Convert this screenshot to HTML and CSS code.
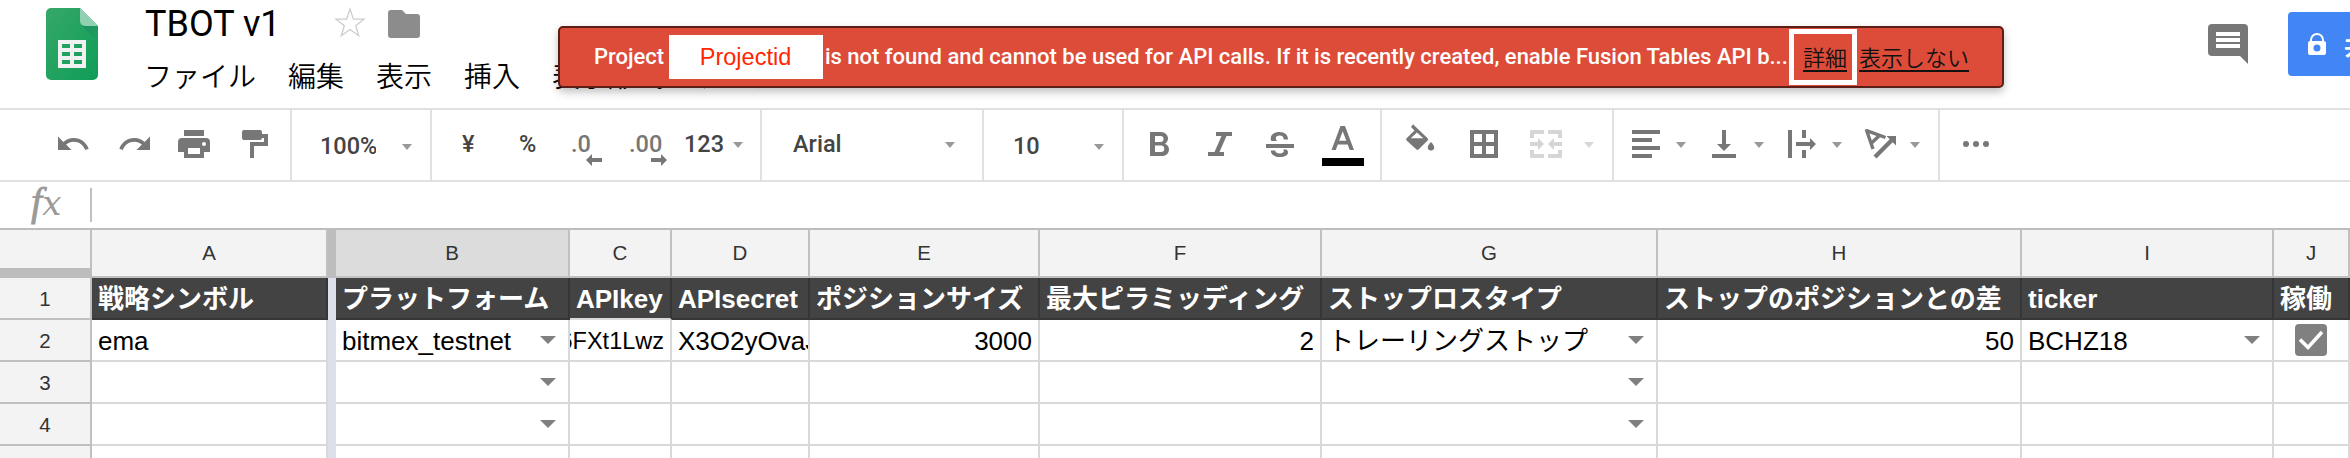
FILE: index.html
```html
<!DOCTYPE html>
<html lang="ja">
<head>
<meta charset="utf-8">
<title>TBOT v1</title>
<link rel="stylesheet" href="styles.css">
</head>
<body>
<header class="header">
  <svg class="logo" viewBox="0 0 52 72">
    <defs>
      <linearGradient id="sheet" x1="0" y1="0" x2="1" y2="1"><stop offset="0" stop-color="#36a868"/><stop offset="1" stop-color="#0f9d58"/></linearGradient>
      <linearGradient id="fold" x1="0" y1="0" x2="1" y2="1"><stop offset="0" stop-color="#1d8f5c"/><stop offset="1" stop-color="#20a063"/></linearGradient>
    </defs>
    <path fill="url(#sheet)" d="M5 0h29l18 18v49a5 5 0 0 1-5 5H5a5 5 0 0 1-5-5V5a5 5 0 0 1 5-5z"/>
    <path fill="url(#fold)" d="M36 17.500L52 34V18z"/>
    <path fill="#8fd1b1" d="M34 0l18 18H39a5 5 0 0 1-5-5z"/>
    <path fill="#f1f1f1" fill-rule="evenodd" d="M12 32h28v28H12zM16 36v4h8v-4zM28 36v4h8v-4zM16 44v4h8v-4zM28 44v4h8v-4zM16 52v4h8v-4zM28 52v4h8v-4z"/>
  </svg>
  <div class="heading">
    <div class="title-row">
      <span class="title">TBOT v1</span>
      <svg class="star" viewBox="0 0 32 32"><path fill="none" stroke="#ccc" stroke-width="1.300" d="M16 3l3.400 10.200h10.600l-8.300 6.500 3 10L16 23.500l-8.700 6.200 3-10L2 13.200h10.600z"/></svg>
      <svg class="folder" viewBox="0 0 32 28"><path fill="#8c8c8c" d="M3 0h11l4 4h11a3 3 0 0 1 3 3v18a3 3 0 0 1-3 3H3a3 3 0 0 1-3-3V3a3 3 0 0 1 3-3z"/></svg>
    </div>
    <nav class="menu"><span>ファイル</span><span>編集</span><span>表示</span><span>挿入</span><span>表示形式</span><span>データ</span><span>ツール</span><span>アドオン</span><span>ヘルプ</span></nav>
  </div>
  <div class="actions">
    <svg class="comment" viewBox="0 0 40 40"><path fill="#777" fill-rule="evenodd" d="M4 0h32a4 4 0 0 1 4 4v36l-8-8H4a4 4 0 0 1-4-4V4a4 4 0 0 1 4-4zM8 8v4h24V8zM8 14v4h24v-4zM8 20v4h24v-4z"/></svg>
    <div class="share">
      <svg class="lock" viewBox="0 0 18 22"><path fill="#fff" fill-rule="evenodd" d="M2 8V7a7 7 0 0 1 14 0v1a2 2 0 0 1 2 2v10a2 2 0 0 1-2 2H2a2 2 0 0 1-2-2V10a2 2 0 0 1 2-2zM4 8h10V7A5 5 0 0 0 4 7zM9 11.500a3.500 3.500 0 1 0 0 7 3.500 3.500 0 0 0 0-7z"/></svg>
      <span>共有</span>
    </div>
  </div>
  <div class="banner">
    <span>Project</span><span class="project">Projectid</span><span class="message">is not found and cannot be used for API calls. If it is recently created, enable Fusion Tables API b...</span><span class="details"><a>詳細</a></span><a>表示しない</a>
  </div>
</header>

<div class="toolbar">
  <div class="group g-history">
    <svg class="icon" viewBox="0 0 24 24"><path d="M12.500 8c-2.650 0-5.050.99-6.900 2.600L2 7v9h9l-3.620-3.620c1.390-1.160 3.160-1.880 5.120-1.880 3.540 0 6.550 2.310 7.600 5.500l2.370-.78C21.080 11.030 17.150 8 12.500 8z"/></svg>
    <svg class="icon redo" viewBox="0 0 24 24"><path d="M18.400 10.600C16.550 8.990 14.150 8 11.500 8c-4.650 0-8.580 3.030-9.960 7.220L3.900 16c1.050-3.190 4.050-5.500 7.600-5.500 1.950 0 3.730.72 5.120 1.880L13 16h9V7l-3.600 3.600z"/></svg>
    <svg class="icon print" viewBox="0 0 36 36"><path fill-rule="evenodd" d="M8 4h20v6H8zM6 12h24a4 4 0 0 1 4 4v10h-6v6H8v-6H2V16a4 4 0 0 1 4-4zM12 22v6h12v-6zM28 16a2 2 0 1 0 0 4 2 2 0 0 0 0-4z"/></svg>
    <svg class="icon paint" viewBox="0 0 36 36"><path d="M6 4h16a2 2 0 0 1 2 2v2h6v12H16v12h-4V16h14v-4h-2v0a2 2 0 0 1-2 2H6a2 2 0 0 1-2-2V6a2 2 0 0 1 2-2z"/></svg>
  </div>
  <div class="group g-zoom"><span class="low zoom">100%</span><i class="caret low"></i></div>
  <div class="group g-format">
    <span class="yen">¥</span><span class="percent">%</span>
    <span class="decimal less">.0<svg viewBox="0 0 16 12"><path d="M0 6l6-6v4h10v4H6v4z"/></svg></span>
    <span class="decimal more">.00<svg viewBox="0 0 16 12"><path d="M16 6l-6-6v4H0v4h10v4z"/></svg></span>
    <span class="num">123</span><i class="caret"></i>
  </div>
  <div class="group g-font"><span>Arial</span><i class="caret"></i></div>
  <div class="group g-size"><span class="low">10</span><i class="caret low"></i></div>
  <div class="group g-style">
    <svg class="icon" viewBox="0 0 36 36"><path fill-rule="evenodd" d="M8 6h11c4 0 7 3 7 6.500 0 2.200-1.200 4.200-3 5.200 2.500 1 4 3 4 5.700 0 3.600-3 6.600-7 6.600H8zM13 10v6h5.500a3 3 0 0 0 0-6zM13 19.500V26h6a3.200 3.200 0 0 0 0-6.500z"/></svg>
    <svg class="icon italic" viewBox="0 0 36 36"><path d="M14 6h16v4h-5.500l-7 16H22v4H6v-4h6.500l7-16H14z"/></svg>
    <svg class="icon strike" viewBox="0 0 36 36"><path d="M4 18h28v4H4z"/><path d="M26 13.500h-4.300c0-2.500-1.400-3.900-4-3.900-2.300 0-3.900 1-3.900 2.800 0 1 .4 1.800 1.500 2.600h-6c-.4-.8-.6-1.700-.6-2.600C8.700 8.600 12.300 6 17.600 6c5.200 0 8.400 2.900 8.400 7.500zM24.500 23.500c.9.900 1.500 1.500 1.500 3 0 2.700-3.200 4.600-8 4.600-5.200 0-9.200-2.400-9.200-6.600h4.400c.1 1.900 2 2.900 4.800 2.900 2.300 0 3.800-.8 3.800-2.400 0-.6-.2-1-.6-1.500z"/></svg>
    <svg class="text-color" viewBox="0 0 42 42"><path fill-rule="evenodd" d="M18.500 2h4.500l9 24h-4.300l-2-5.400H15.800l-2 5.400H9.500zM20.700 7.200l-3.500 9.600h7.100z"/><path fill="#000" d="M0 34h42v8H0z"/></svg>
  </div>
  <div class="group g-cells">
    <svg class="icon fill" viewBox="0 0 36 36"><path fill-rule="evenodd" d="M11 -1.800l14.600 14a1.500 1.500 0 0 1 0 2.200L16.500 23.500a1.500 1.500 0 0 1-2 0L4.600 14.400a1.500 1.500 0 0 1 0-2.200L12.500 4.500 9 1zM15 6.500L8.700 12.300h12.600zM29 16s3.200 3.200 3.200 5.200a3.200 3.200 0 0 1-6.400 0c0-2 3.200-5.200 3.200-5.200z"/></svg>
    <svg class="icon borders" viewBox="0 0 36 36"><path fill-rule="evenodd" d="M4 4h28v28H4zM8 8v8h8V8zM20 8v8h8V8zM8 20v8h8v-8zM20 20v8h8v-8z"/></svg>
    <svg class="icon merge" viewBox="0 0 36 36"><path d="M2 4h14v4H6v4H2zM20 4h14v8h-4V8H20zM2 24h4v4h10v4H2zM30 24h4v8H20v-4h10zM2 16h8v-4l6 6-6 6v-4H2zM34 16h-8v-4l-6 6 6 6v-4h8z"/></svg>
    <i class="caret pale"></i>
  </div>
  <div class="group g-align">
    <svg class="icon" viewBox="0 0 36 36"><path d="M4 4h28v4H4zM4 12h20v4H4zM4 20h28v4H4zM4 28h20v4H4z"/></svg><i class="caret c1"></i>
    <svg class="icon valign" viewBox="0 0 36 36"><path d="M6 28h24v4H6zM16 4h4v14h5l-7 7-7-7h5z"/></svg><i class="caret c2"></i>
    <svg class="icon wrap" viewBox="0 0 36 36"><path d="M4 4h4v28H4zM18 4h4v8h-4zM18 24h4v8h-4zM12 16h14v-4l6 6-6 6v-4H12z"/></svg><i class="caret c3"></i>
    <svg class="icon rotate" viewBox="0 0 36 36"><path fill="none" stroke="#777" stroke-width="3.400" stroke-linejoin="round" d="M23.500 11.500L4.700 4.700 11 23M17.500 9.500l-8.500 8"/><path d="M24.500 10H34v9.500l-3.300-3.300L14.500 32.500l-3-3L27.700 13.200z"/></svg><i class="caret c4"></i>
  </div>
  <svg class="dots" viewBox="0 0 26 6"><circle cx="3" cy="3" r="3"/><circle cx="13" cy="3" r="3"/><circle cx="23" cy="3" r="3"/></svg>
</div>

<div class="formula"><span class="fx"><span class="f">f</span><span class="x">x</span></span><i class="divider"></i></div>

<main class="sheet">
  <div class="row letters">
    <div class="corner"></div><div>A</div><div class="freeze"></div><div class="selected">B</div><div>C</div><div>D</div><div>E</div><div>F</div><div>G</div><div>H</div><div>I</div><div>J</div>
  </div>
  <div class="row titles">
    <div class="number">1</div><div>戦略シンボル</div><div class="freeze"></div><div>プラットフォーム</div><div class="light">APIkey</div><div>APIsecret</div><div>ポジションサイズ</div><div>最大ピラミッディング</div><div>ストップロスタイプ</div><div>ストップのポジションとの差</div><div>ticker</div><div>稼働</div>
  </div>
  <div class="row">
    <div class="number">2</div><div>ema</div><div class="freeze"></div><div class="pick">bitmex_testnet<i class="arrow"></i></div><div class="right key">6FXt1Lwz</div><div>X3O2yOvaJ</div><div class="right">3000</div><div class="right">2</div><div class="pick">トレーリングストップ<i class="arrow"></i></div><div class="right">50</div><div class="pick">BCHZ18<i class="arrow"></i></div>
    <div class="checkcell"><svg class="check" viewBox="0 0 32 32"><rect width="32" height="32" rx="4" fill="#808080"/><path fill="none" stroke="#fff" stroke-width="3.600" d="M5 15.500l8 8L27 8"/></svg></div>
  </div>
  <div class="row">
    <div class="number">3</div><div></div><div class="freeze"></div><div class="pick"><i class="arrow"></i></div><div></div><div></div><div></div><div></div><div class="pick"><i class="arrow"></i></div><div></div><div></div><div></div>
  </div>
  <div class="row">
    <div class="number">4</div><div></div><div class="freeze"></div><div class="pick"><i class="arrow"></i></div><div></div><div></div><div></div><div></div><div class="pick"><i class="arrow"></i></div><div></div><div></div><div></div>
  </div>
  <div class="row last">
    <div class="number"></div><div></div><div class="freeze"></div><div></div><div></div><div></div><div></div><div></div><div></div><div></div><div></div><div></div>
  </div>
</main>
</body>
</html>
```
FILE: styles.css
```css
* { box-sizing: border-box; }
body { margin: 0; width: 2350px; height: 458px; overflow: hidden; background: #fff; font-family: "Liberation Sans", "Noto Sans CJK JP", sans-serif; color: #000; }
svg { display: block; flex: none; }

/* Header */
.header { position: relative; display: flex; height: 108px; padding-left: 46px; }
.logo { width: 52px; height: 72px; margin-top: 8px; }
.heading { flex: 1; margin-left: 46px; }
.title-row { display: flex; height: 48px; align-items: flex-start; }
.title { width: 190px; padding-left: 1px; font: 36px/48px Roboto, sans-serif; }
.star { width: 32px; height: 32px; margin-top: 6px; }
.folder { width: 32px; height: 28px; margin: 10px 0 0 22px; }
.menu { display: flex; gap: 32px; margin-top: 10px; font: 28px/34px "Noto Sans CJK JP", sans-serif; font-weight: 350; white-space: nowrap; }
.actions { display: flex; width: 142px; }
.comment { width: 40px; height: 40px; margin-top: 24px; }
.share { display: flex; align-items: center; flex: none; width: 62px; height: 64px; margin: 12px 0 0 40px; padding-left: 20px; overflow: hidden; gap: 18px; background: #4285f4; border-radius: 4px 0 0 4px; color: #fff; font: bold 24px "Noto Sans CJK JP", sans-serif; white-space: nowrap; }
.lock { width: 18px; height: 22px; }

/* Error notice lies over the menu bar */
.banner { position: absolute; left: 558px; top: 26px; display: flex; align-items: center; width: 1446px; height: 62px; padding-left: 34px; background: #dd4b39; border: 2px solid #5c1f18; border-radius: 5px; box-shadow: 0 4px 8px rgba(0, 0, 0, .25); color: #fff; font: 500 22px/26px Roboto, "Noto Sans CJK JP", sans-serif; white-space: nowrap; }
.banner > span:first-child { width: 75px; }
.banner .project { width: 154px; height: 44px; padding-right: 1px; background: #fff; color: #ff2600; font: 23.500px/44px "Liberation Sans", sans-serif; text-align: center; }
.banner .message { width: 966px; padding-left: 2px; letter-spacing: -0.01px; }
.banner .details { display: flex; align-items: center; justify-content: center; width: 68px; height: 56px; margin-right: 2px; padding-left: 4px; border: 5px solid #fff; }
.banner a { color: #111; font: 350 22px/26px "Noto Sans CJK JP", sans-serif; padding-bottom: 2px; text-decoration: underline; text-decoration-thickness: 2px; text-underline-offset: 4px; }

/* Toolbar */
.toolbar { display: flex; height: 74px; border-top: 2px solid #e0e0e0; border-bottom: 2px solid #e0e0e0; color: #444; fill: #777; font: 500 23.500px/28px Roboto, sans-serif; }
.group { display: flex; align-items: center; height: 70px; padding-bottom: 2px; border-right: 2px solid #e0e0e0; }
.icon { width: 36px; height: 36px; overflow: visible; }
.caret { flex: none; width: 10px; height: 6px; background: #999; clip-path: polygon(0 0, 100% 0, 50% 100%); position: relative; top: 1px; }
.low { position: relative; top: 2px; }
.caret.low { top: 3px; }
.caret.pale { background: #d8d8d8; }
.g-history { width: 292px; padding-left: 55px; }
.redo { margin-left: 26px; }
.print { margin-left: 23px; }
.paint { margin-left: 26px; }
.g-zoom { width: 140px; padding-left: 28px; }
.zoom { width: 56px; overflow: hidden; margin-right: 26px; }
.g-format { width: 330px; padding-left: 30px; }
.yen { width: 57px; }
.percent { width: 52px; }
.decimal { position: relative; width: 58px; color: #777; }
.decimal svg { position: absolute; width: 16px; height: 12px; top: 24px; left: 15px; }
.decimal.more { width: 55px; }
.decimal.more svg { left: 22px; }
.num { width: 49px; }
.g-font { width: 222px; padding-left: 31px; }
.g-font span { width: 152px; }
.g-size { width: 140px; padding-left: 29px; }
.g-size span { width: 81px; }
.g-style { width: 258px; padding-left: 18px; }
.italic { margin-left: 24px; }
.strike { margin-left: 24px; }
.text-color { width: 42px; height: 42px; margin: 2px 0 0 24px; }
.g-cells { width: 232px; padding-left: 20px; }
.borders { margin-left: 28px; }
.merge { margin-left: 26px; margin-right: 20px; fill: #d6d6d6; }
.g-align { width: 326px; padding-left: 14px; }
.c1 { margin-left: 12px; }
.valign { margin-left: 20px; }
.c2 { margin-left: 12px; }
.wrap { margin-left: 20px; }
.c3 { margin-left: 12px; }
.rotate { margin-left: 20px; }
.c4 { margin-left: 12px; }
.dots { width: 26px; height: 6px; margin: 31px 0 0 23px; }

/* Formula bar */
.formula { display: flex; height: 46px; align-items: center; color: #999; }
.fx { display: flex; align-items: baseline; width: 90px; height: 46px; padding-left: 31px; font: italic 40px/40px "Liberation Serif", serif; -webkit-text-stroke: .8px #999; }
.x { font: italic 34px/40px "DejaVu Serif", serif; -webkit-text-stroke: 0; }
.divider { width: 2px; height: 34px; background: #c0c0c0; }

/* Sheet */
.sheet { height: 230px; overflow: hidden; border-top: 2px solid #bdbdbd; }
.row { display: grid; grid-template-columns: 92px 236px 8px 234px 102px 138px 230px 282px 336px 364px 252px 76px; height: 42px; font-size: 26px; line-height: 42px; white-space: nowrap; }
.row > div { overflow: hidden; height: 42px; padding: 0 6px; border-right: 2px solid #d9d9d9; border-bottom: 2px solid #d9d9d9; }
.row > .number { padding: 0; background: #f3f3f3; border-color: #c0c0c0; color: #333; font-size: 20.500px; text-align: center; }
.row > .freeze { padding: 0; border: 0; background: #dce0ea; }
.row > .right { text-align: right; }
.row > .key { display: flex; justify-content: flex-end; font-size: 23.500px; }
.row > .pick { display: flex; justify-content: space-between; padding-right: 12px; }
.arrow { flex: none; width: 16px; height: 8px; margin: 16px 0 0 auto; background: #808080; clip-path: polygon(0 0, 100% 0, 50% 100%); }
.row > .checkcell { padding: 4px 0 0 21px; }
.check { width: 32px; height: 32px; }
.letters { height: 48px; color: #333; font-size: 20.500px; line-height: 46px; text-align: center; }
.row.letters > div { height: 48px; padding: 0; background: #f3f3f3; border-color: #c0c0c0; }
.row.letters > .corner { border-bottom: 10px solid #bdbdbd; }
.row.letters > .selected { background: #dcdcdc; }
.row.letters > .freeze { background: #bdbdbd; }
.titles { color: #fff; font-weight: bold; }
.titles > div:not(.number):not(.freeze) { background: #434343; border-color: #363636; }
.titles > div.light:not(.number) { border-bottom-color: #d9d9d9; }
.titles > .number { font-weight: normal; }
.last, .row.last > div { height: 12px; border-bottom: 0; }
```
